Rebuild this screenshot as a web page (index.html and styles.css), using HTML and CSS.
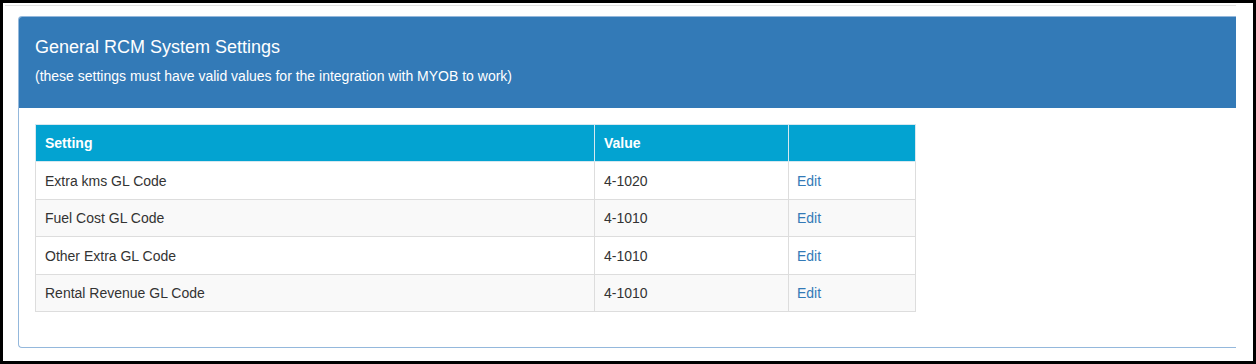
FILE: index.html
```html
<!DOCTYPE html>
<html lang="en">
<head>
    <meta charset="UTF-8">
    <meta name="viewport" content="width=device-width, initial-scale=1.0">
    <title>General RCM System Settings</title>
    <link rel="stylesheet" href="styles.css">
</head>
<body>
    <div class="frame">
        <div class="top-rule"></div>
        <div class="panel">
            <div class="panel-heading">
                <h3 class="panel-title">General RCM System Settings</h3>
                <p class="panel-note">(these settings must have valid values for the integration with MYOB to work)</p>
            </div>
            <div class="panel-body">
                <table class="settings">
                    <thead>
                        <tr>
                            <th class="col-setting">Setting</th>
                            <th class="col-value">Value</th>
                            <th class="col-action"></th>
                        </tr>
                    </thead>
                    <tbody>
                        <tr>
                            <td>Extra kms GL Code</td>
                            <td>4-1020</td>
                            <td><a href="#">Edit</a></td>
                        </tr>
                        <tr>
                            <td>Fuel Cost GL Code</td>
                            <td>4-1010</td>
                            <td><a href="#">Edit</a></td>
                        </tr>
                        <tr>
                            <td>Other Extra GL Code</td>
                            <td>4-1010</td>
                            <td><a href="#">Edit</a></td>
                        </tr>
                        <tr>
                            <td>Rental Revenue GL Code</td>
                            <td>4-1010</td>
                            <td><a href="#">Edit</a></td>
                        </tr>
                    </tbody>
                </table>
            </div>
        </div>
    </div>
</body>
</html>
```

FILE: styles.css
```css
* {
    margin: 0;
    padding: 0;
    box-sizing: border-box;
}

html, body {
    background: #000;
}

body {
    font-family: 'Liberation Sans', Arial, sans-serif;
    font-size: 14px;
    color: #333;
    padding: 3px;
}

.frame {
    background: #fff;
    width: 1250px;
    height: 358px;
    padding-top: 2px;
}

.top-rule {
    margin-left: 2px;
    width: 1231px;
    height: 1px;
    background: #e2e2e2;
}

.panel {
    margin-top: 10px;
    margin-left: 15px;
    width: 1218px;
    border: 1px solid #94b8dc;
    border-right: none;
    border-radius: 4px 0 0 4px;
}

.panel-heading {
    background: #337ab7;
    color: #fff;
    height: 91px;
    padding: 19px 16px 0;
    border-radius: 3px 0 0 0;
}

.panel-title {
    font-size: 18px;
    font-weight: normal;
    line-height: 22px;
}

.panel-note {
    font-size: 14px;
    line-height: 18px;
    margin-top: 9px;
}

.panel-body {
    padding: 16px 16px 35px;
}

.settings {
    border-collapse: collapse;
    width: 881px;
}

.settings th,
.settings td {
    border: 1px solid #ddd;
    padding: 8px 9px;
    line-height: 20.4px;
    text-align: left;
}

.settings td {
    padding-top: 8.5px;
    padding-bottom: 7.5px;
}

.settings th {
    background: #03a3d1;
    color: #fff;
    font-weight: bold;
    border-color: #d6e8f0;
}

.col-setting {
    width: 559px;
}

.col-value {
    width: 194px;
}

.settings tbody tr:nth-child(even) {
    background: #f9f9f9;
}

.settings a {
    color: #337ab7;
    text-decoration: none;
    margin-left: -1px;
}
```
